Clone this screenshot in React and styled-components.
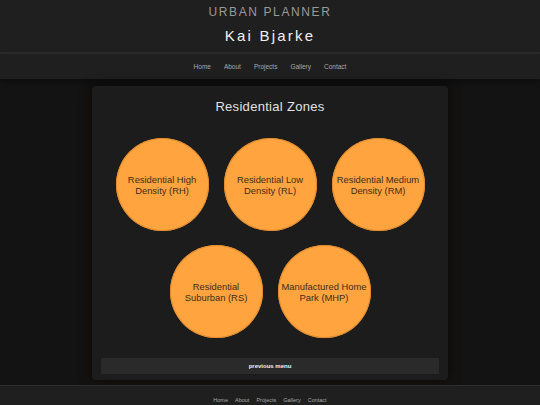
import React from 'react';
import styled, { createGlobalStyle } from 'styled-components';

const GlobalStyle = createGlobalStyle`
  html, body {
    margin: 0;
    padding: 0;
    background: #131313;
    font-family: 'Liberation Sans', Arial, sans-serif;
  }
`;

const Page = styled.div`
  display: flex;
  flex-direction: column;
  height: 100vh;
  overflow: hidden;
`;

const Header = styled.header`
  background: #1f1f1f;
  display: flex;
  flex-direction: column;
  align-items: center;
  border-bottom: 2px solid #2b2b2b;
  box-sizing: border-box;
  height: 54px;
`;

const Kicker = styled.div`
  margin-top: 5px;
  font-size: 12px;
  line-height: 14px;
  letter-spacing: 1.6px;
  color: #9a9a9a;
`;

const Name = styled.h1`
  margin: 8px 0 0;
  font-size: 15px;
  line-height: 18px;
  font-weight: 400;
  letter-spacing: 2.2px;
  color: #f0f0f0;
`;

const Nav = styled.nav`
  height: 25px;
  flex-shrink: 0;
  background: #1f1f1f;
  display: flex;
  justify-content: center;
  align-items: center;
  gap: 13px;
  box-shadow: 0 3px 6px rgba(0, 0, 0, 0.35);
`;

const FooterNav = styled.div`
  display: flex;
  justify-content: center;
  gap: 7px;
`;

const NavLink = styled.a`
  font-size: ${p => p.size}px;
  color: #a8a8a8;
  text-decoration: none;
`;

const Main = styled.main`
  flex: 1;
  padding-top: 7px;
  display: flex;
  justify-content: center;
  align-items: flex-start;
`;

const Card = styled.section`
  width: 356px;
  box-sizing: border-box;
  background: #1c1c1c;
  border-radius: 4px;
  padding: 13px 9px 6px;
  box-shadow: 0 0 12px rgba(0, 0, 0, 0.6), 0 6px 14px rgba(40, 22, 0, 0.35);
  display: flex;
  flex-direction: column;
  align-items: center;
`;

const Title = styled.h2`
  margin: 0 0 23px;
  font-size: 13px;
  line-height: 16px;
  font-weight: 400;
  letter-spacing: 0.3px;
  color: #e2e2e2;
`;

const Zones = styled.div`
  width: 320px;
  display: flex;
  flex-wrap: wrap;
  justify-content: center;
  column-gap: 15px;
  row-gap: 14px;
`;

const Zone = styled.div`
  width: 93px;
  height: 93px;
  flex-shrink: 0;
  border-radius: 50%;
  background: #ffa43f;
  box-shadow: inset 0 0 0 1px #e08b2d;
  display: flex;
  align-items: center;
  justify-content: center;
  text-align: center;
  font-size: 9.4px;
  line-height: 11px;
  color: #3d2c1b;
  padding: 0 3px;
  box-sizing: border-box;
`;

const BackButton = styled.button`
  margin-top: 20px;
  width: 100%;
  height: 16px;
  border: 0;
  background: #2a2a2a;
  color: #f2f2f2;
  font-family: 'Liberation Sans', Arial, sans-serif;
  font-size: 6px;
  font-weight: 700;
  cursor: pointer;
`;

const Footer = styled.footer`
  height: 20px;
  flex-shrink: 0;
  background: #1f1f1f;
  border-top: 1px solid #2d2d2d;
  box-sizing: border-box;
  display: flex;
  justify-content: center;
  align-items: flex-end;
  padding-bottom: 2px;
`;

const links = ['Home', 'About', 'Projects', 'Gallery', 'Contact'];

const zones = [
  ['Residential High', 'Density (RH)'],
  ['Residential Low', 'Density (RL)'],
  ['Residential Medium', 'Density (RM)'],
  ['Residential', 'Suburban (RS)'],
  ['Manufactured Home', 'Park (MHP)'],
];

export default function App() {
  return (
    <Page>
      <GlobalStyle />
      <Header>
        <Kicker>URBAN PLANNER</Kicker>
        <Name>Kai Bjarke</Name>
      </Header>
      <Nav>
        {links.map(l => (
          <NavLink key={l} href="#" size={6.5}>{l}</NavLink>
        ))}
      </Nav>
      <Main>
        <Card>
          <Title>Residential Zones</Title>
          <Zones>
            {zones.map(([a, b]) => (
              <Zone key={a + b}>
                <span>{a}<br />{b}</span>
              </Zone>
            ))}
          </Zones>
          <BackButton>previous menu</BackButton>
        </Card>
      </Main>
      <Footer>
        <FooterNav>
          {links.map(l => (
            <NavLink key={l} href="#" size={5.5}>{l}</NavLink>
          ))}
        </FooterNav>
      </Footer>
    </Page>
  );
}
